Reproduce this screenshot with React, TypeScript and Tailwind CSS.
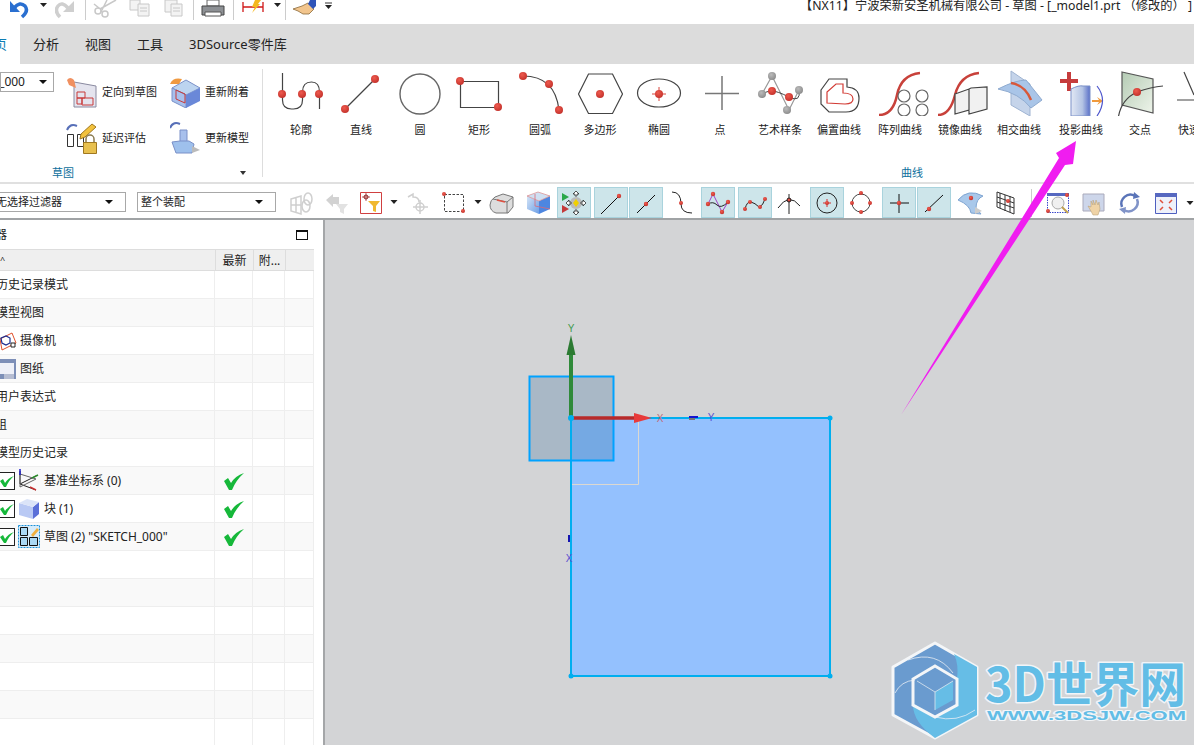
import React from 'react';

// every drawing below uses screen coordinates through its viewBox, so numbers read straight off the reference
const Ball = ({ x, y, r = 4, gray }: { x: number; y: number; r?: number; gray?: boolean }) => (
  <circle cx={x} cy={y} r={r} fill={gray ? 'url(#ballGray)' : 'url(#ball)'} />
);

const Caret = ({ x, y }: { x: number; y: number }) => (
  <path d={`M${x - 3.5} ${y - 2}h7l-3.5 4z`} fill="#222" />
);

const quick = [
  { x: 8, w: 22, node: <g><path d="M14 8q6-7 11-2 4 5-3 11" fill="none" stroke="#2a6fd0" strokeWidth="3.500" /><path d="M10 1v11h10z" fill="#2a6fd0" /></g> },
  { x: 40, w: 8, node: <Caret x={43.5} y={5} /> },
  { x: 55, w: 21, node: <g><path d="M68 8q-6-7-10-2-4 5 2 11" fill="none" stroke="#cfcfcf" strokeWidth="3.500" /><path d="M74 1v11H63z" fill="#cfcfcf" /></g> },
  { x: 85, w: 2, node: <path d="M85.5 0v20" stroke="#ccc" /> },
  { x: 92, w: 26, node: <g fill="none" stroke="#c8c8c8" strokeWidth="1.5"><circle cx="98" cy="11" r="3" /><circle cx="105" cy="14" r="3" /><path d="M100 9 116 0M101 12l6-12M94 4l5 4" /></g> },
  { x: 129, w: 22, node: <g fill="#f3f3f3" stroke="#c8c8c8"><path d="M130 0h10v10h-10z" /><path d="M138 4h11v12h-11z" /><path d="M140 8h7M140 11h7" /></g> },
  { x: 164, w: 20, node: <g fill="#f3f3f3" stroke="#c8c8c8"><path d="M165 0h12v12h-12z" /><path d="M171 4h11v12h-11z" /><path d="M173 8h7M173 11h7" /></g> },
  { x: 193, w: 2, node: <path d="M193.5 0v20" stroke="#ccc" /> },
  { x: 201, w: 25, node: <g><path d="M207 0h12v6h-12z" fill="#fff" stroke="#666" /><path d="M202 6h22v9h-22z" fill="#8d9094" stroke="#444" /><path d="M205 12h16v4h-16z" fill="#fff" stroke="#555" /></g> },
  { x: 233, w: 2, node: <path d="M233.5 0v20" stroke="#ccc" /> },
  { x: 241, w: 24, node: <g><path d="M243 2v10M263 2v10M243 7h20" stroke="#d01818" strokeWidth="1.3" /><path d="M255 0h6l-3 4h2l-8 9 3-6h-3z" fill="#f4b81e" /></g> },
  { x: 274, w: 8, node: <Caret x={277.5} y={5} /> },
  { x: 285, w: 2, node: <path d="M285.5 0v20" stroke="#ccc" /> },
  { x: 292, w: 26, node: <g><path d="M293 9l9-3 6-3 6 6-5 5h-6l-5-3z" fill="#f2c58d" stroke="#8a6a3a" strokeWidth=".8" /><path d="M310 0h6v6l-3 3-5-5z" fill="#2f54b8" /></g> },
  { x: 325, w: 7, node: <g><path d="M325 3h7" stroke="#333" /><Caret x={328.5} y={7} /></g> },
];

const ribbon = [
  { label: '轮廓', x: 271, w: 60, node: <g><path d="M282.5 73v27q0 9 9 9h2q9 0 9-9v-8q0-10 9-10h0q8 0 8 10v17" fill="none" stroke="#444" strokeWidth="1.2" /><Ball x={282} y={94} /><Ball x={302} y={94} /><Ball x={319} y={94} /></g> },
  { label: '直线', x: 331, w: 60, node: <g><path d="M345 109l30-30" stroke="#444" strokeWidth="1.2" /><Ball x={345} y={109} /><Ball x={375} y={79} /></g> },
  { label: '圆', x: 391, w: 58, node: <circle cx="420" cy="94" r="20" fill="none" stroke="#666" strokeWidth="1.4" /> },
  { label: '矩形', x: 449, w: 60, node: <g><path d="M460.5 81.500h38v26h-38z" fill="none" stroke="#444" strokeWidth="1.2" /><Ball x={460} y={81} /><Ball x={498} y={107} /></g> },
  { label: '圆弧', x: 509, w: 62, node: <g><path d="M523 76q32 0 36 34" fill="none" stroke="#444" strokeWidth="1.2" /><Ball x={523} y={76} /><Ball x={549} y={84} /><Ball x={559} y={110} /></g> },
  { label: '多边形', x: 571, w: 58, node: <g><path d="M578.500 94l10-20h24l10 20-10 19.500h-24z" fill="none" stroke="#444" strokeWidth="1.2" /><Ball x={600} y={94} /></g> },
  { label: '椭圆', x: 629, w: 60, node: <g><ellipse cx="659" cy="93" rx="21.500" ry="14" fill="none" stroke="#444" strokeWidth="1.2" /><path d="M652 94h14M659 87v14" stroke="#d8443a" /><Ball x={659} y={94} /></g> },
  { label: '点', x: 689, w: 62, node: <path d="M705 93.500h34M722 76v34" stroke="#777" strokeWidth="1.5" /> },
  { label: '艺术样条', x: 751, w: 58, node: <g><path d="M762 94l10-18 17 34 10-20" fill="none" stroke="#999" strokeWidth="1.2" /><path d="M762 94q5-3 10-3t17 6 10-7" fill="none" stroke="#444" /><Ball x={772} y={76} gray /><Ball x={762} y={94} gray /><Ball x={787} y={110} gray /><Ball x={799} y={90} gray /><Ball x={772} y={91} /><Ball x={789} y={97} /></g> },
  { label: '偏置曲线', x: 809, w: 60, node: <g fill="none"><path d="M821 90l8-11h18v8q12 1 12 11 0 14-13 14h-17l-8-8z" stroke="#444" strokeWidth="1.2" /><path d="M827 103V92l9-8h7v9q10 0 10 6 0 5-8 5z" stroke="#d23b34" strokeWidth="1.2" /></g> },
  { label: '阵列曲线', x: 869, w: 62, node: <g fill="none"><path d="M879 115q14 0 18-20t23-22" stroke="#c8413a" strokeWidth="2.500" /><g stroke="#666" strokeWidth="1.2" fill="#fff"><circle cx="904" cy="96" r="6" /><circle cx="922" cy="96" r="6" /><circle cx="904" cy="110" r="6" /><circle cx="922" cy="110" r="6" /></g></g> },
  { label: '镜像曲线', x: 931, w: 58, node: <g><path d="M938 115q12 0 17-20t24-22" fill="none" stroke="#c8413a" strokeWidth="2.500" /><path d="M955 94l14-5v21l-14 4zM969 89l2-1 16-1v22l-18 5z" fill="#f1f1f1" stroke="#444" strokeWidth="1.2" /></g> },
  { label: '相交曲线', x: 989, w: 60, node: <g><path d="M1011 71l19 13v32l-19-11z" fill="#c5d4ea" stroke="#9fb4d2" /><path d="M998 89q18-9 28-9l16 20-11 8q-12-15-33-19z" fill="#a9c5e8" stroke="#8fabd0" /><path d="M1011 83q14 2 20 17" fill="none" stroke="#d8583a" strokeWidth="2.500" /></g> },
  { label: '投影曲线', x: 1049, w: 64, node: <g><path d="M1060 81h18M1069 72v19" stroke="#c63c3c" strokeWidth="4" /><path d="M1071 89q8-4 12-3h7v30h-19z" fill="url(#cyl)" stroke="#7a90c8" /><path d="M1092 100h7l-2-3 6 4-6 4 2-3h-7z" fill="#f09a3c" /><path d="M1097 86q11 14 0 30" fill="none" stroke="#4d55cc" strokeWidth="1.2" /></g> },
  { label: '交点', x: 1113, w: 54, node: <g><path d="M1122 72l31 7v34l-31-8z" fill="url(#plane)" stroke="#555" strokeWidth="1.2" /><path d="M1118 120q2-20 19-28 14-5 26-6" fill="none" stroke="#444" strokeWidth="1.2" /><Ball x={1137} y={92} /></g> },
  { label: '快速修剪', x: 1167, w: 66, node: <path d="M1184 72l10 23M1177 100h20" stroke="#444" strokeWidth="1.2" fill="none" /> },
];

const tools = [
  { x: 288, w: 28, node: <g fill="none" stroke="#cfcfcf" strokeWidth="1.5"><path d="M291 198l10-3v18l-10-3zM291 204h10M296 196v15" /><ellipse cx="308" cy="198" rx="4" ry="6" /><ellipse cx="306" cy="205" rx="4" ry="6" /></g> },
  { x: 325, w: 24, node: <g fill="#d2d2d2"><path d="M326 199l7-6v3h6v7h-6v3z" /><path d="M336 203h12l-4 5v5l-4-2v-3z" fill="#e2e2e2" /></g> },
  { x: 360, w: 22, node: <g><path d="M360.500 191.500h21v21h-21z" fill="#fff" stroke="#d04040" /><path d="M366 192v8M362 196h8" stroke="#a33" strokeWidth=".8" /><circle cx="366" cy="196" r="2" fill="none" stroke="#822" /><path d="M368 200h12l-4 5v6l-3-1v-5z" fill="#f0b830" /></g> },
  { x: 390, w: 8, node: <Caret x={394} y={201} /> },
  { x: 405, w: 24, node: <g fill="none" stroke="#cfcfcf" strokeWidth="1.5"><path d="M408 196l5-3v3q6 0 6 5" /><circle cx="420" cy="206" r="4" /><path d="M420 199v14M413 206h15" /></g> },
  { x: 442, w: 24, node: <g><path d="M444.500 193.500h19v17h-19z" fill="none" stroke="#444" strokeDasharray="2.500 1.500" /><Ball x={444} y={193} r={2} /><Ball x={463} y={210} r={2} /></g> },
  { x: 474, w: 8, node: <Caret x={478} y={201} /> },
  { x: 489, w: 25, node: <g stroke="#777"><path d="M490 204q0-5 5-8l8-3 10 3v10l-5 6h-12q-6-2-6-8z" fill="#ddd" /><path d="M493 198l14 3 6-5M507 201v11" fill="none" /><path d="M497 199l8 2" stroke="#e05040" strokeWidth="1.500" /></g> },
  { x: 526, w: 25, node: <g><path d="M527 195l12 5v13l-12-5z" fill="url(#cube)" /><path d="M539 200l11-5v13l-11 5z" fill="#4d86e0" /><path d="M527 195l11-4 12 4-11 5z" fill="#cfe0f2" stroke="#d88" strokeWidth=".7" /><path d="M535 193v12l15 3" fill="none" stroke="#d86a7a" strokeWidth=".8" /></g> },
  { x: 557, w: 34, on: true, node: <g><path d="M562 192l7 4-7 4z" fill="#2aa84a" /><path d="M562 204l7 4-7 4z" fill="#c43a3a" /><circle cx="576" cy="202" r="6" fill="#bbb" /><path d="M576 198l3 4-3 4-3-4z" fill="#f0d000" /><path d="M576 190l3 3h-2v2h-2v-2h-2zM576 214l3-3h-2v-2h-2v2h-2zM566 202l3-3v2h2v2h-2v2zM586 202l-3-3v2h-2v2h2v2z" fill="#fff" stroke="#111" strokeWidth=".7" /></g> },
  { x: 594, w: 34, on: true, node: <g><path d="M601 213l18-18" stroke="#111" /><Ball x={619} y={195} r={2.200} /></g> },
  { x: 629, w: 34, on: true, node: <g><path d="M637 212l18-18" stroke="#111" /><Ball x={646} y={203} r={2.200} /></g> },
  { x: 669, w: 25, node: <g><path d="M672 191q9 0 9 12 0 9 11 9" fill="none" stroke="#222" /><Ball x={681} y={202} r={2} /></g> },
  { x: 701, w: 34, on: true, node: <g fill="none"><path d="M708 203l5-10 9 18 6-10" stroke="#a040c8" /><path d="M708 203q5-3 9 1t11-3" stroke="#222" /><Ball x={713} y={193} r={2.200} /><Ball x={708} y={203} r={2.200} /><Ball x={722} y={211} r={2.200} /><Ball x={728} y={201} r={2.200} /></g> },
  { x: 738, w: 34, on: true, node: <g><path d="M745 208q2-8 6-7t8 5q4-1 6-8" fill="none" stroke="#222" /><Ball x={745} y={208} r={2} /><Ball x={750} y={201} r={2} /><Ball x={760} y={206} r={2} /><Ball x={765} y={198} r={2} /></g> },
  { x: 777, w: 25, node: <g fill="none" stroke="#222"><path d="M778 207q11-16 22-2M789 193v20" /><Ball x={789} y={199} r={2} /></g> },
  { x: 810, w: 34, on: true, node: <g><circle cx="827" cy="202" r="10" fill="none" stroke="#222" /><path d="M823 202h8M827 198v8" stroke="#d03030" /><Ball x={827} y={202} r={2} /></g> },
  { x: 848, w: 26, node: <g><circle cx="861" cy="202" r="9" fill="none" stroke="#444" /><Ball x={861} y={192} r={2} /><Ball x={861} y={211} r={2} /><Ball x={852} y={202} r={2} /><Ball x={870} y={202} r={2} /></g> },
  { x: 882, w: 34, on: true, node: <g><path d="M890 202h19M899 193v19" stroke="#111" /><Ball x={899} y={202} r={2.200} /></g> },
  { x: 917, w: 34, on: true, node: <g><path d="M925 211l18-17" stroke="#111" /><Ball x={929} y={208} r={2.200} /></g> },
  { x: 957, w: 28, node: <g><path d="M958 199q10-12 25-4-7 3-7 12l5 6-10-1q-1-8-13-13z" fill="#a9c8ea" stroke="#7fa5d2" /><path d="M975 206l7 4-7 3z" fill="#ccc" /><Ball x={971} y={197} r={2.200} /></g> },
  { x: 995, w: 21, node: <g><path d="M997 191l17 6v16l-17-7zM1000 192v15M1005 194v16M1010 195v16M997 196l17 6M997 201l17 6" fill="none" stroke="#333" /><Ball x={1008} y={200} r={2} /></g> },
  { x: 1031, w: 2, node: <path d="M1031.500 188v28" stroke="#ccc" /> },
  { x: 1046, w: 28, node: <g><path d="M1047.500 192.500h21v19h-21z" fill="#fff" stroke="#3c48cc" strokeDasharray="1.500 1" /><path d="M1047 192h22v3h-22z" fill="#5668c0" /><circle cx="1058" cy="202" r="6" fill="#f0f0f0" stroke="#aaa" /><path d="M1062 206l6 6" stroke="#c0a050" strokeWidth="2" /><Ball x={1067} y={194} r={2} /><Ball x={1048} y={210} r={2} /></g> },
  { x: 1082, w: 26, node: <g><path d="M1083 193h21v17h-21z" fill="#cdd6ea" stroke="#aab" /><path d="M1092 212l-4-7 3 1v-6l2 4v-5l2 5 1-5 2 5 1-3 1 7-2 6h-5z" fill="#efd3a6" stroke="#b39a70" strokeWidth=".5" /></g> },
  { x: 1118, w: 24, node: <g fill="none" strokeWidth="2.500"><path d="M1122 206a9 9 0 0 1 13-11" stroke="#5a74b8" /><path d="M1137 198a9 9 0 0 1-13 11" stroke="#8093c8" /><path d="M1134 191l6 5-7 2z" fill="#5a74b8" strokeWidth="0" /><path d="M1125 213l-6-5 7-2z" fill="#8093c8" strokeWidth="0" /></g> },
  { x: 1155, w: 23, node: <g><path d="M1155.500 192.500h21v20h-21z" fill="#eef1fa" stroke="#4e5fc0" /><path d="M1155 192h22v4h-22z" fill="#5668c0" /><path d="M1160 199l3 3M1172 199l-3 3M1160 209l3-3M1172 209l-3-3" stroke="#e0503c" strokeWidth="1.500" /></g> },
  { x: 1186, w: 8, node: <Caret x={1190} y={202} /> },
];

const rows = [
  { text: '历史记录模式' },
  { text: '模型视图' },
  {
    text: '摄像机', indent: true,
    icon: <g fill="none"><path d="M0 9l12-6 4 10-14 7z" stroke="#e0502c" /><path d="M1 8l5-2 4 2v5l-4 2-4-2z" stroke="#1a2c90" strokeWidth="1.200" /><path d="M11 13h4v4h-4z" fill="#fff" stroke="#222" /></g>,
  },
  {
    text: '图纸', indent: true,
    icon: <g><path d="M0 1h16v20H0z" fill="#7d8fb8" /><path d="M0 5h14v11H0z" fill="#eef0f8" /><path d="M4 16h10v5H4z" fill="#b6bdd2" /></g>,
  },
  { text: '用户表达式' },
  { text: '组', clip: true },
  { text: '模型历史记录' },
];

const tree = [
  {
    text: '基准坐标系 (0)',
    icon: <g fill="none" strokeWidth="1"><path d="M2 2v13l16 6M2 15l16-8" stroke="#222" /><path d="M2 5l16 5-16 8z" stroke="#666" /><path d="M2 0v6" stroke="#1a1ac8" strokeWidth="1.500" /><path d="M14 9l6-3" stroke="#2a8a2a" strokeWidth="1.500" /><path d="M12 18l6 3" stroke="#c83030" strokeWidth="1.500" /></g>,
  },
  {
    text: '块 (1)',
    icon: <g><path d="M1 6l14 4v12L1 18z" fill="#b9c9f4" /><path d="M15 10l6-5v12l-6 5z" fill="#5a6fd8" /><path d="M1 6l8-4 12 3-6 5z" fill="#dbe4f8" /></g>,
  },
  {
    text: '草图 (2) "SKETCH_000"',
    icon: <g><path d="M0.500 0.500h21v22h-21z" fill="#d6ecfb" stroke="#1a90d8" strokeDasharray="2 1" /><path d="M2.500 2.500h7v8h-7zM2.500 12.500h7v8h-7zM11.500 12.500h8v8h-8z" fill="#aad8f4" stroke="#111" /><path d="M13 10l6-7 2 2-6 7z" fill="#f0b040" /></g>,
  },
];

const Check = () => (
  <svg width="20" height="18" viewBox="0 0 20 18">
    <path d="M0 9l5 9h3Q12 8 20 1 11 4 7 11L4 6z" fill="#16b83a" />
  </svg>
);

const Row = ({ even, children, ok }: { even: boolean; children?: React.ReactNode; ok?: boolean }) => (
  <div className={`grid h-[28px] shrink-0 grid-cols-[215px_38px_32px_29px] items-center border-b border-[#eeeeee] ${even ? 'bg-white' : 'bg-[#f9f9f9]'}`}>
    <div className="flex h-full items-center overflow-hidden border-r border-[#eeeeee]">{children}</div>
    <div className="flex h-full items-center justify-center border-r border-[#eeeeee]">{ok && <Check />}</div>
    <div className="h-full border-r border-[#eeeeee]" />
    <div className="h-full border-r border-[#eeeeee]" />
  </div>
);

const Select = ({ cls, text, textCls }: { cls: string; text: string; textCls: string }) => (
  <div className={`flex h-[20px] shrink-0 items-center overflow-hidden border border-[#a8a8a8] bg-white text-[11px] leading-[18px] ${cls}`}>
    <span className={`shrink-0 whitespace-nowrap ${textCls}`}>{text}</span>
    <svg width="12" height="8" viewBox="0 0 12 8" className="ml-auto mr-[8px] shrink-0"><path d="M0 2h8l-4 4z" fill="#111" /></svg>
  </div>
);

export default function App() {
  return (
    <div className="relative flex h-[745px] w-[1194px] flex-col overflow-hidden bg-white font-['Noto_Sans','Noto_Sans_CJK_SC',sans-serif] text-[#222]">
      <svg className="absolute h-0 w-0">
        <defs>
          <radialGradient id="ball" cx="40%" cy="35%" r="70%">
            <stop offset="0%" stopColor="#ee5a4e" />
            <stop offset="100%" stopColor="#c2302a" />
          </radialGradient>
          <radialGradient id="ballGray" cx="40%" cy="35%" r="70%">
            <stop offset="0%" stopColor="#bbbbbb" />
            <stop offset="100%" stopColor="#8a8a8a" />
          </radialGradient>
          <linearGradient id="cyl" x1="0" x2="1" y1="0" y2="0">
            <stop offset="0%" stopColor="#e2e8f4" />
            <stop offset="60%" stopColor="#b4c4e4" />
            <stop offset="100%" stopColor="#5a70c8" />
          </linearGradient>
          <linearGradient id="plane" x1="0" x2="1" y1="0" y2="1">
            <stop offset="0%" stopColor="#b4cbb4" />
            <stop offset="100%" stopColor="#eef4ea" />
          </linearGradient>
          <linearGradient id="cube" x1="0" x2="1" y1="0" y2="1">
            <stop offset="0%" stopColor="#d4e4f6" />
            <stop offset="100%" stopColor="#6c9ee6" />
          </linearGradient>
        </defs>
      </svg>

      {/* quick access + title */}
      <div className="relative flex h-[24px] shrink-0 items-start overflow-hidden">
        {quick.map((q, i) => (
          <svg
            key={i}
            width={q.w}
            height={24}
            viewBox={`${q.x} 0 ${q.w} 24`}
            className="shrink-0"
            style={{ marginLeft: i === 0 ? q.x : q.x - quick[i - 1].x - quick[i - 1].w }}
          >
            {q.node}
          </svg>
        ))}
        <div className="ml-auto mt-[-3px] whitespace-nowrap pr-[2px] text-[12.250px] leading-[18px]">
          【NX11】宁波荣新安圣机械有限公司 - 草图 - [_model1.prt （修改的） ]
        </div>
      </div>

      {/* tabs */}
      <div className="flex h-[40px] shrink-0 items-center bg-[#dcdcdc] text-[13px] leading-[18px]">
        <div className="flex h-full w-[20px] items-center justify-end overflow-hidden bg-white pr-[13px] text-[#0c7db4]">
          <span className="shrink-0">主页</span>
        </div>
        <span className="ml-[13px]">分析</span>
        <span className="ml-[26px]">视图</span>
        <span className="ml-[26px]">工具</span>
        <span className="ml-[26px]">3DSource零件库</span>
      </div>

      {/* ribbon */}
      <div className="flex h-[120px] shrink-0 border-b-2 border-[#e0e0e0] text-[11px] leading-[14px]">
        <div className="relative flex w-[262px] shrink-0 flex-col">
          <div className="mt-[8px] flex h-[20px] w-[54px] items-center justify-end overflow-hidden border border-[#a8a8a8] pr-[6px] text-[12px]">
            <span className="shrink-0">SKETCH_000</span>
            <svg width="8" height="6" viewBox="0 0 8 6" className="ml-[14px] shrink-0"><path d="M0 1h8L4 5z" fill="#111" /></svg>
          </div>
          <div className="absolute left-[66px] top-[12px] grid grid-cols-[104px_94px] gap-y-[14px]">
            <div className="flex h-[32px] items-center gap-[5px]">
              <svg width="31" height="32" viewBox="0 0 31 32">
                <path d="M8 6l22 4v21H8z" fill="#e4e4ee" stroke="#8a8aa0" />
                <path d="M11 16h8v6h-8zM11 22h5v6h-5zM16 22h11v7H16z" fill="none" stroke="#c83838" />
                <path d="M1 4q3-4 7 0l2 8-7-3z" fill="#f09060" />
              </svg>
              <span>定向到草图</span>
            </div>
            <div className="flex h-[32px] items-center gap-[5px]">
              <svg width="30" height="32" viewBox="0 0 30 32">
                <path d="M2 12l14-8 14 8-14 7z" fill="#bcd4f0" stroke="#7a90c8" />
                <path d="M2 12l14 7v13L2 25z" fill="#a8c0ec" stroke="#7a90c8" />
                <path d="M16 19l14-7v13l-14 7z" fill="#6a88d8" />
                <path d="M6 14l9 4v9l-9-4z" fill="none" stroke="#c83838" />
                <path d="M0 8q3-7 12-5l-3 5z" fill="#f09a40" />
              </svg>
              <span>重新附着</span>
            </div>
            <div className="flex h-[32px] items-center gap-[5px]">
              <svg width="31" height="32" viewBox="0 0 31 32">
                <path d="M1.500 12.500h6v12h-6zM11.500 12.500h6v12h-6z" fill="none" stroke="#333" />
                <path d="M1 8q3-7 10-4" fill="none" stroke="#5870b8" strokeWidth="2" />
                <path d="M15 12l11-10 4 3-11 10-5 2z" fill="#f2c23e" stroke="#a07820" />
                <path d="M20 20v-3a4 4 0 0 1 8 0v3" fill="none" stroke="#8a7a50" strokeWidth="1.500" />
                <path d="M17.500 20.500h13v11h-13z" fill="#e8c04e" stroke="#a07820" />
              </svg>
              <span>延迟评估</span>
            </div>
            <div className="flex h-[32px] items-center gap-[5px]">
              <svg width="30" height="32" viewBox="0 0 30 32">
                <path d="M0 6q3-7 10-4" fill="none" stroke="#5870b8" strokeWidth="2" />
                <path d="M10 8h7v12h-7z" fill="#a8c0ec" stroke="#7a90c8" />
                <path d="M2 20l8-1h9l5 3-2 9H6z" fill="#9ec0ec" stroke="#7a90c8" />
                <path d="M22 24l8 4-8 3z" fill="#bbb" />
              </svg>
              <span>更新模型</span>
            </div>
          </div>
          <div className="mt-auto flex h-[18px] items-center pl-[52px] text-[#0c6f9c]">
            <span>草图</span>
            <svg width="6" height="4" viewBox="0 0 6 4" className="ml-[166px]"><path d="M0 0h6L3 4z" fill="#333" /></svg>
          </div>
        </div>
        <div className="my-[5px] w-px shrink-0 bg-[#dddddd]" />
        <div className="flex min-w-0 flex-1 flex-col overflow-hidden pl-[8px]">
          <div className="flex">
            {ribbon.map((r) => (
              <div key={r.label} className="flex shrink-0 flex-col items-center" style={{ width: r.w }}>
                <svg width={r.w} height={52} viewBox={`${r.x} 64 ${r.w} 52`}>
                  {r.node}
                </svg>
                <span className="mt-[7px] whitespace-nowrap">{r.label}</span>
              </div>
            ))}
          </div>
          <div className="mt-auto flex h-[18px] items-center pl-[630px] text-[#0c6f9c]">曲线</div>
        </div>
      </div>

      {/* selection bar */}
      <div className="flex h-[36px] shrink-0 items-center overflow-hidden border-b-2 border-[#a0a3a5] pt-[2px]">
        <Select cls="w-[126px] border-l-0" text="无选择过滤器" textCls="ml-[-4px]" />
        <Select cls="ml-[11px] w-[139px]" text="整个装配" textCls="ml-[3px]" />
        <div className="flex h-full items-center">
          {tools.map((t, i) => (
            <div
              key={t.x}
              className={`flex h-[31px] shrink-0 items-center justify-center ${t.on ? 'border border-[#a9d3dd] bg-[#cde5ea]' : ''}`}
              style={{ marginLeft: t.x - (i === 0 ? 276 : tools[i - 1].x + tools[i - 1].w), width: t.w }}
            >
              <svg width={t.w} height={31} viewBox={`${t.x} 186 ${t.w} 31`} className="shrink-0">
                {t.node}
              </svg>
            </div>
          ))}
        </div>
      </div>

      <div className="flex min-h-0 flex-1">
        {/* part navigator */}
        <div className="flex w-[325px] shrink-0 flex-col overflow-hidden border-r-2 border-[#a4a6a8] bg-white text-[12px] leading-[16px]">
          <div className="flex h-[29px] shrink-0 items-center">
            <span className="ml-[-53px] shrink-0">部件导航器</span>
            <span className="ml-[289px] h-[10px] w-[12px] shrink-0 border border-t-2 border-[#111]" />
          </div>
          <div className="w-[314px]">
            <div className="grid h-[22px] grid-cols-[215px_38px_32px_29px] items-center border-y border-[#dddddd] bg-[#efefef]">
              <span className="text-[9px] leading-[10px]">^</span>
              <span className="flex h-full items-center justify-center border-l border-[#dddddd] pt-[2px]">最新</span>
              <span className="flex h-full items-center justify-center border-l border-[#dddddd] pt-[2px]">附...</span>
              <span className="h-full border-l border-[#dddddd]" />
            </div>
            {rows.map((r, i) => (
              <Row key={r.text} even={i % 2 === 0}>
                {r.icon ? (
                  <>
                    <svg width="18" height="22" viewBox="0 0 18 22" className="shrink-0">{r.icon}</svg>
                    <span className="ml-[2px] mt-[1px] shrink-0">{r.text}</span>
                  </>
                ) : (
                  <span className={`mt-[1px] shrink-0 ${r.clip ? 'ml-[-5px]' : 'ml-[-4px]'}`}>{r.text}</span>
                )}
              </Row>
            ))}
            {tree.map((r, i) => (
              <Row key={r.text} even={i % 2 !== 0} ok>
                <span className="flex h-[18px] w-[15px] shrink-0 items-center justify-center border border-l-0 border-[#222] bg-white">
                  <svg width="14" height="12" viewBox="0 0 14 12"><path d="M0 6l4 6h2q3-7 8-11-6 2-9 7L3 4z" fill="#16b83a" /></svg>
                </span>
                <svg width="22" height="23" viewBox="0 0 22 23" className="ml-[3px] shrink-0">{r.icon}</svg>
                <span className="ml-[4px] mt-[1px] shrink-0 whitespace-nowrap">{r.text}</span>
              </Row>
            ))}
            {[0, 1, 2, 3, 4, 5, 6].map((n) => (
              <Row key={n} even={n % 2 === 0} />
            ))}
          </div>
        </div>

        {/* graphics window */}
        <div className="min-w-0 flex-1 bg-[#d3d4d6]">
          <svg width="869" height="525" viewBox="325 220 869 525" className="block">
            <path d="M529.500 376.500h84v84h-84z" fill="#a9b8c6" />
            <path d="M571 418h259v258H571z" fill="#94c1fe" stroke="#00aeef" strokeWidth="2" />
            <path d="M572 419h41v41h-41z" fill="#75a9e3" />
            <path d="M529.500 376.500h84v84h-84z" fill="none" stroke="#00a2ff" strokeWidth="2" />
            <path d="M638.500 419v65.500H572" fill="none" stroke="#dcd8d0" />
            <path d="M571 418V350" stroke="#2f8a3a" strokeWidth="4" />
            <path d="M571 335l4.500 20h-9z" fill="#2b7a32" />
            <path d="M572 418h66" stroke="#b82a2a" strokeWidth="3.500" />
            <path d="M652 418l-18-5v10z" fill="#e83a3a" />
            <circle cx="571" cy="418" r="3" fill="#00aeef" />
            <circle cx="830" cy="418" r="2.500" fill="#00aeef" />
            <circle cx="571" cy="676" r="2.500" fill="#00aeef" />
            <circle cx="830" cy="676" r="2.500" fill="#00aeef" />
            <path d="M689 416h9v2h-9z" fill="#1414d0" />
            <path d="M689 418h6v2h-6z" fill="#777" />
            <path d="M568 535h2v7h-2z" fill="#1414b0" />
            <g fontFamily="Liberation Sans, sans-serif" fontSize="10">
              <text x="571" y="332" textAnchor="middle" fill="#3f9a4f">Y</text>
              <text x="660" y="422" textAnchor="middle" fill="#c06a78">X</text>
              <text x="711" y="421" textAnchor="middle" fill="#5a50d0">Y</text>
              <text x="569" y="562" textAnchor="middle" fill="#5a50d0">X</text>
            </g>

            {/* watermark */}
            <path d="M935 643l42 24v48l-42 23-42-23v-48z" fill="#6a9bcf" stroke="#f4f6f8" strokeWidth="3" strokeLinejoin="round" />
            <path d="M954 654l23 13v48l-42 23q-22-16-22-33l22 12 22-12v-26q2-14-3-25z" fill="#66bde6" />
            <path d="M895 693q6-12 20-13M908 660q28-10 45 13M935 717q22 6 40-7" fill="none" stroke="#e8eef4" strokeWidth=".8" />
            <path d="M935 666l22 13v26l-22 12-22-12v-26z" fill="none" stroke="#f4f6f8" strokeWidth="3" />
            <path d="M935 670l18 11-18 11-18-11z" fill="#6a9bcf" />
            <path d="M917 681l18 11v18l-18-10z" fill="#6a9bcf" />
            <path d="M953 681l-18 11v18l18-10z" fill="#66bde6" />
            <path d="M917 681l18 11 18-11M935 692v18" fill="none" stroke="#dfe8f0" strokeWidth=".8" />
            <g fontFamily="Noto Sans CJK SC, sans-serif" fontWeight="700" fill="#62bde6" stroke="#f2f5f8" strokeWidth="3" paintOrder="stroke" strokeLinejoin="round">
              <text x="985" y="702" fontSize="48" textLength="201" lengthAdjust="spacingAndGlyphs">3D世界网</text>
              <text x="987" y="720" fontSize="12" strokeWidth="2" fontFamily="Liberation Sans, sans-serif" textLength="199" lengthAdjust="spacingAndGlyphs">WWW.3DSJW.COM</text>
            </g>
          </svg>
        </div>
      </div>

      {/* annotation arrow */}
      <svg width="1194" height="745" viewBox="0 0 1194 745" className="pointer-events-none absolute left-0 top-0">
        <path d="M1076 141l-20 12 3 5-158 257 164-250 8-1z" fill="#f01df0" />
      </svg>
    </div>
  );
}
